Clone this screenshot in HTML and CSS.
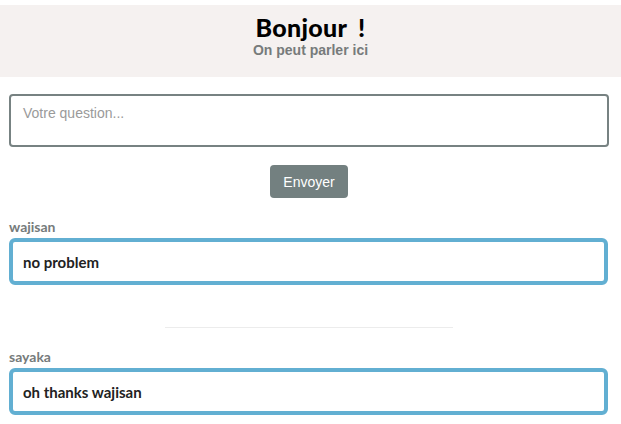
FILE: index.html
```html
<!DOCTYPE html>
<html lang="fr">
<head>
<meta charset="utf-8">
<title>Bonjour</title>
<link rel="stylesheet" href="styles.css">
</head>
<body>
<header class="header">
  <h1 class="title">Bonjour !</h1>
  <p class="subtitle">On peut parler ici</p>
</header>
<main class="main">
  <form class="ask">
    <textarea class="question" placeholder="Votre question..."></textarea>
    <button type="button" class="send">Envoyer</button>
  </form>
  <section class="messages">
    <div class="message">
      <div class="author">wajisan</div>
      <div class="bubble">no problem</div>
    </div>
    <hr class="sep">
    <div class="message">
      <div class="author">sayaka</div>
      <div class="bubble">oh thanks wajisan</div>
    </div>
  </section>
</main>
</body>
</html>
```
FILE: styles.css
```css
html, body {
  margin: 0;
  padding: 0;
  background: #ffffff;
}
body {
  font-family: "Liberation Sans", Arial, sans-serif;
}
.header {
  margin-top: 5px;
  height: 72px;
  box-sizing: border-box;
  padding-top: 7px;
  background: #f5f1f0;
  text-align: center;
}
.title {
  margin: 0;
  font-family: Lato, "Liberation Sans", sans-serif;
  font-weight: 900;
  font-size: 25px;
  line-height: 30px;
  color: #000;
  letter-spacing: 0.3px;
  word-spacing: 5px;
}
.subtitle {
  margin: 0;
  font-weight: bold;
  font-size: 14px;
  line-height: 16px;
  color: #777b7b;
}
.main {
  padding: 17px 12px 0 9px;
}
.ask {
  display: flex;
  flex-direction: column;
  align-items: center;
}
.question {
  display: block;
  width: 600px;
  height: 53px;
  box-sizing: border-box;
  border: 2px solid #778282;
  border-radius: 4px;
  padding: 8px 12px;
  font-family: "Liberation Sans", Arial, sans-serif;
  font-size: 14px;
  line-height: 18px;
  resize: none;
  outline: none;
}
.question::placeholder {
  color: #9a9a9a;
}
.send {
  margin-top: 18px;
  width: 78px;
  height: 33px;
  border: none;
  border-radius: 4px;
  background: #738080;
  color: #fff;
  font-family: "Liberation Sans", Arial, sans-serif;
  font-size: 14px;
  padding: 0;
}
.messages {
  margin-top: 21px;
}
.author {
  font-family: Lato, "Open Sans", sans-serif;
  font-weight: bold;
  font-size: 14px;
  line-height: 16px;
  color: #767b7b;
  margin-bottom: 3px;
}
.bubble {
  width: 599px;
  height: 47px;
  box-sizing: border-box;
  border: 4px solid #62afd2;
  border-radius: 6px;
  padding: 0 10px;
  display: flex;
  align-items: center;
  font-family: Lato, "Open Sans", sans-serif;
  font-weight: bold;
  font-size: 15px;
  color: #222;
}
.sep {
  width: 288px;
  margin: 42px 0 21px 156px;
  border: none;
  border-top: 1px solid #ececec;
  height: 0;
}
```
